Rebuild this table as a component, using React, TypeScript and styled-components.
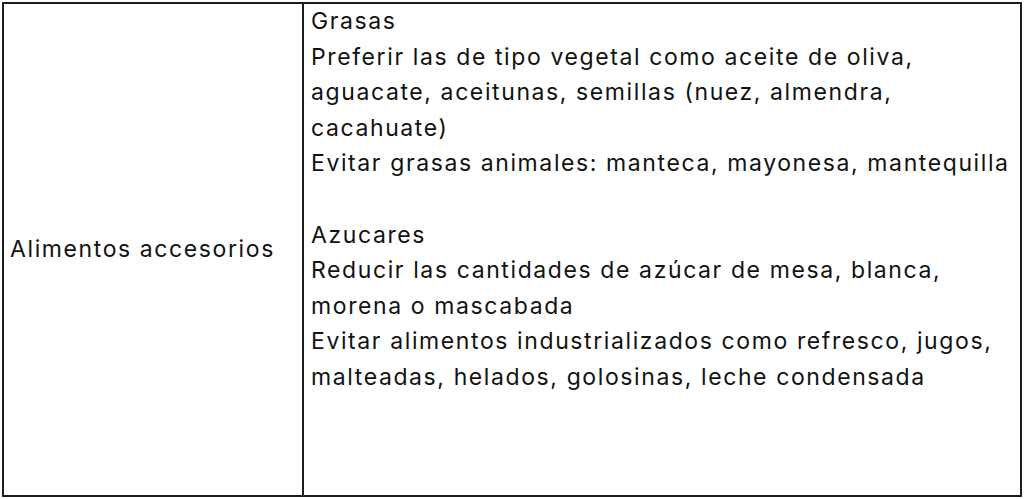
import React from "react";
import styled, { createGlobalStyle } from "styled-components";

const Global = createGlobalStyle`
  html, body { margin: 0; padding: 0; background: #ffffff; }
  body { font-family: Inter, "Open Sans", sans-serif; color: #121212; }
`;

const Table = styled.div`
  margin: 2px 0 0 2px;
  width: 1020px;
  height: 495px;
  box-sizing: border-box;
  border: 2px solid #1e1e1e;
  display: grid;
  grid-template-columns: 298px 1fr;
`;

const Cell = styled.div<{ $center?: boolean }>`
  display: flex;
  flex-direction: column;
  justify-content: ${(p) => (p.$center ? "center" : "flex-start")};
  padding: 0 0 0 7px;
  font-size: 23px;
  line-height: 35.6px;
  letter-spacing: 1.6px;
  white-space: nowrap;
  & + & {
    border-left: 2px solid #1e1e1e;
  }
`;

const Label = styled.div`
  margin-left: -1px;
`;

const Group = styled.div`
  & + & {
    margin-top: 35.6px;
  }
`;

const Line = styled.div``;

const groups: string[][] = [
  [
    "Grasas",
    "Preferir las de tipo vegetal como aceite de oliva,",
    "aguacate, aceitunas, semillas (nuez, almendra,",
    "cacahuate)",
    "Evitar grasas animales: manteca, mayonesa, mantequilla",
  ],
  [
    "Azucares",
    "Reducir las cantidades de azúcar de mesa, blanca,",
    "morena o mascabada",
    "Evitar alimentos industrializados como refresco, jugos,",
    "malteadas, helados, golosinas, leche condensada",
  ],
];

export default function App() {
  return (
    <>
      <Global />
      <Table>
        <Cell $center>
          <Label>Alimentos accesorios</Label>
        </Cell>
        <Cell>
          {groups.map((g, i) => (
            <Group key={i}>
              {g.map((l, j) => (
                <Line key={j}>{l}</Line>
              ))}
            </Group>
          ))}
        </Cell>
      </Table>
    </>
  );
}
